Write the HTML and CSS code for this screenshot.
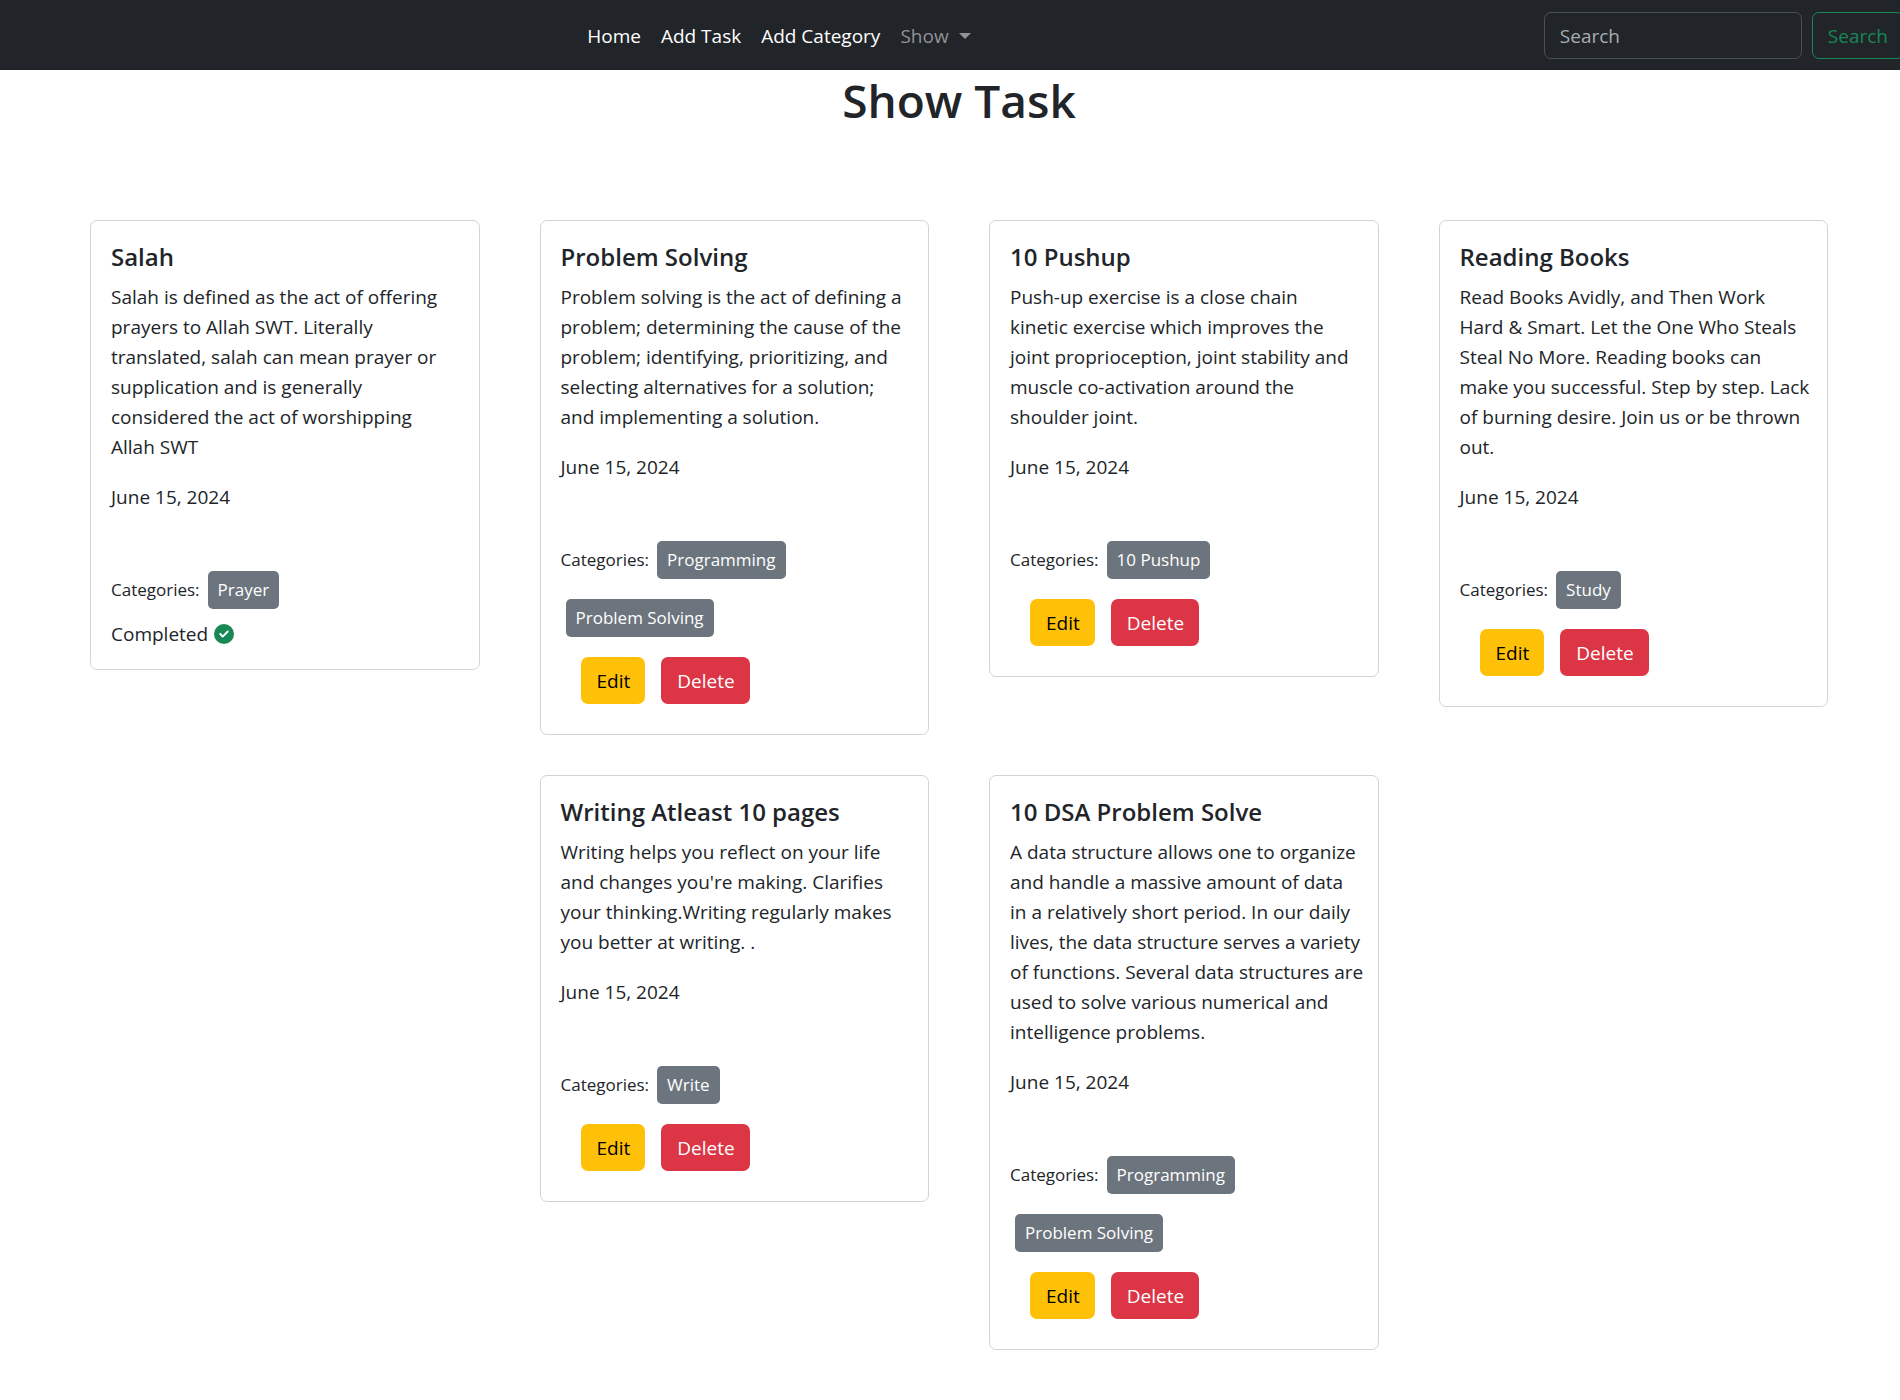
FILE: index.html
```html
<!DOCTYPE html>
<html lang="en">
<head>
<meta charset="utf-8">
<meta name="viewport" content="width=device-width, initial-scale=1">
<title>Show Task</title>
<link rel="stylesheet" href="styles.css">
</head>
<body>
<header class="navbar">
  <nav class="nav-links">
    <a class="nav-link" href="#">Home</a>
    <a class="nav-link" href="#">Add Task</a>
    <a class="nav-link" href="#">Add Category</a>
    <button class="nav-link nav-toggle" type="button">Show<span class="caret"></span></button>
  </nav>
  <form class="search" role="search">
    <input class="search-input" type="search" placeholder="Search" aria-label="Search">
    <button class="search-button" type="button">Search</button>
  </form>
</header>
<main>
  <h1 class="page-title">Show Task</h1>
  <div class="tasks">
    <article class="card">
      <h2 class="card-title">Salah</h2>
      <p class="card-text">Salah is defined as the act of offering<br>prayers to Allah SWT. Literally<br>translated, salah can mean prayer or<br>supplication and is generally<br>considered the act of worshipping<br>Allah SWT</p>
      <p class="card-date">June 15, 2024</p>
      <div class="categories"><span class="label">Categories:</span><a class="tag" href="#">Prayer</a></div>
      <p class="status">Completed
        <svg class="check" viewBox="0 0 512 512" aria-hidden="true"><path d="M256 512A256 256 0 1 0 256 0a256 256 0 1 0 0 512zM369 209L241 337c-9.400 9.400-24.600 9.400-33.900 0l-64-64c-9.400-9.400-9.400-24.600 0-33.900s24.600-9.400 33.900 0l47 47L335 175c9.400-9.400 24.600-9.400 33.900 0s9.400 24.600 0 33.900z"/></svg>
      </p>
    </article>
    <article class="card">
      <h2 class="card-title">Problem Solving</h2>
      <p class="card-text">Problem solving is the act of defining a<br>problem; determining the cause of the<br>problem; identifying, prioritizing, and<br>selecting alternatives for a solution;<br>and implementing a solution.</p>
      <p class="card-date">June 15, 2024</p>
      <div class="categories"><span class="label">Categories:</span><a class="tag" href="#">Programming</a><a class="tag" href="#">Problem Solving</a></div>
      <div class="actions"><button class="btn btn-edit" type="button">Edit</button><button class="btn btn-delete" type="button">Delete</button></div>
    </article>
    <article class="card">
      <h2 class="card-title">10 Pushup</h2>
      <p class="card-text">Push-up exercise is a close chain<br>kinetic exercise which improves the<br>joint proprioception, joint stability and<br>muscle co-activation around the<br>shoulder joint.</p>
      <p class="card-date">June 15, 2024</p>
      <div class="categories"><span class="label">Categories:</span><a class="tag" href="#">10 Pushup</a></div>
      <div class="actions"><button class="btn btn-edit" type="button">Edit</button><button class="btn btn-delete" type="button">Delete</button></div>
    </article>
    <article class="card">
      <h2 class="card-title">Reading Books</h2>
      <p class="card-text">Read Books Avidly, and Then Work<br>Hard &amp; Smart. Let the One Who Steals<br>Steal No More. Reading books can<br>make you successful. Step by step. Lack<br>of burning desire. Join us or be thrown<br>out.</p>
      <p class="card-date">June 15, 2024</p>
      <div class="categories"><span class="label">Categories:</span><a class="tag" href="#">Study</a></div>
      <div class="actions"><button class="btn btn-edit" type="button">Edit</button><button class="btn btn-delete" type="button">Delete</button></div>
    </article>
    <article class="card second-column">
      <h2 class="card-title">Writing Atleast 10 pages</h2>
      <p class="card-text">Writing helps you reflect on your life<br>and changes you're making. Clarifies<br>your thinking.Writing regularly makes<br>you better at writing. .</p>
      <p class="card-date">June 15, 2024</p>
      <div class="categories"><span class="label">Categories:</span><a class="tag" href="#">Write</a></div>
      <div class="actions"><button class="btn btn-edit" type="button">Edit</button><button class="btn btn-delete" type="button">Delete</button></div>
    </article>
    <article class="card">
      <h2 class="card-title">10 DSA Problem Solve</h2>
      <p class="card-text">A data structure allows one to organize<br>and handle a massive amount of data<br>in a relatively short period. In our daily<br>lives, the data structure serves a variety<br>of functions. Several data structures are<br>used to solve various numerical and<br>intelligence problems.</p>
      <p class="card-date">June 15, 2024</p>
      <div class="categories"><span class="label">Categories:</span><a class="tag" href="#">Programming</a><a class="tag" href="#">Problem Solving</a></div>
      <div class="actions"><button class="btn btn-edit" type="button">Edit</button><button class="btn btn-delete" type="button">Delete</button></div>
    </article>
  </div>
</main>
</body>
</html>
```
FILE: styles.css
```css
* { box-sizing: border-box; }

body {
  margin: 0;
  background: #fff;
  color: #212529;
  font-family: "Open Sans", "Noto Sans", sans-serif;
  font-size: 19px;
  line-height: 30px;
}

h1, h2, p { margin: 0; }

button, input { font: inherit; }

.navbar {
  display: flex;
  align-items: center;
  height: 70px;
  overflow: hidden;
  background: #212529;
}

.nav-links {
  display: flex;
  flex: 1;
  justify-content: center;
  padding-left: 14px;
}

.nav-link {
  padding: 11px 10px 10px;
  color: #fff;
  text-decoration: none;
}

.nav-toggle {
  display: flex;
  align-items: center;
  gap: 10px;
  border: 0;
  background: none;
  color: #909294;
}

.caret {
  border: 6px solid transparent;
  border-top-color: currentColor;
  border-bottom: 0;
}

.search {
  display: flex;
  gap: 10px;
  margin-right: -4px;
}

.search-input {
  width: 258px;
  height: 47px;
  padding: 1px 15px 0;
  border: 1px solid #495057;
  border-radius: 7px;
  background: #212529;
  color: #dee2e6;
}

.search-input::placeholder { color: #a7acb1; opacity: 1; }

.search-button {
  height: 47px;
  padding: 1px 15px 0;
  border: 1px solid #198754;
  border-radius: 7px;
  background: none;
  color: #198754;
}

.page-title {
  padding-left: 18px;
  font-size: 46px;
  font-weight: 600;
  line-height: 60px;
  text-align: center;
}

.tasks {
  display: grid;
  grid-template-columns: repeat(4, 1fr);
  align-items: start;
  gap: 40px 60px;
  padding: 90px 72px 40px 90px;
}

.second-column { grid-column-start: 2; }

.card {
  padding: 20px;
  border: 1px solid #d3d4d4;
  border-radius: 7px;
}

.card-title {
  margin-bottom: 10px;
  font-size: 24px;
  font-weight: 600;
  line-height: 31px;
}

.card-text {
  margin: 0 -8px 20px 0;
}

.card-date { margin-bottom: 59px; }

.categories {
  display: flex;
  flex-wrap: wrap;
  align-items: center;
  gap: 20px 3px;
  font-size: 17px;
}

.tag {
  margin-left: 5px;
  padding: 4px 10px;
  border-radius: 5px;
  background: #6c757d;
  color: #fff;
  text-decoration: none;
}

.status {
  display: flex;
  align-items: center;
  gap: 6px;
  margin-top: 10px;
}

.check {
  width: 20px;
  height: 20px;
  fill: #198754;
}

.actions {
  display: flex;
  gap: 16px;
  padding: 20px 20px 10px;
}

.btn {
  height: 47px;
  padding: 1px 15px 0 16px;
  border: 0;
  border-radius: 7px;
}

.btn-edit { background: #ffc107; color: #000; }

.btn-delete { background: #dc3545; color: #fff; }
```
